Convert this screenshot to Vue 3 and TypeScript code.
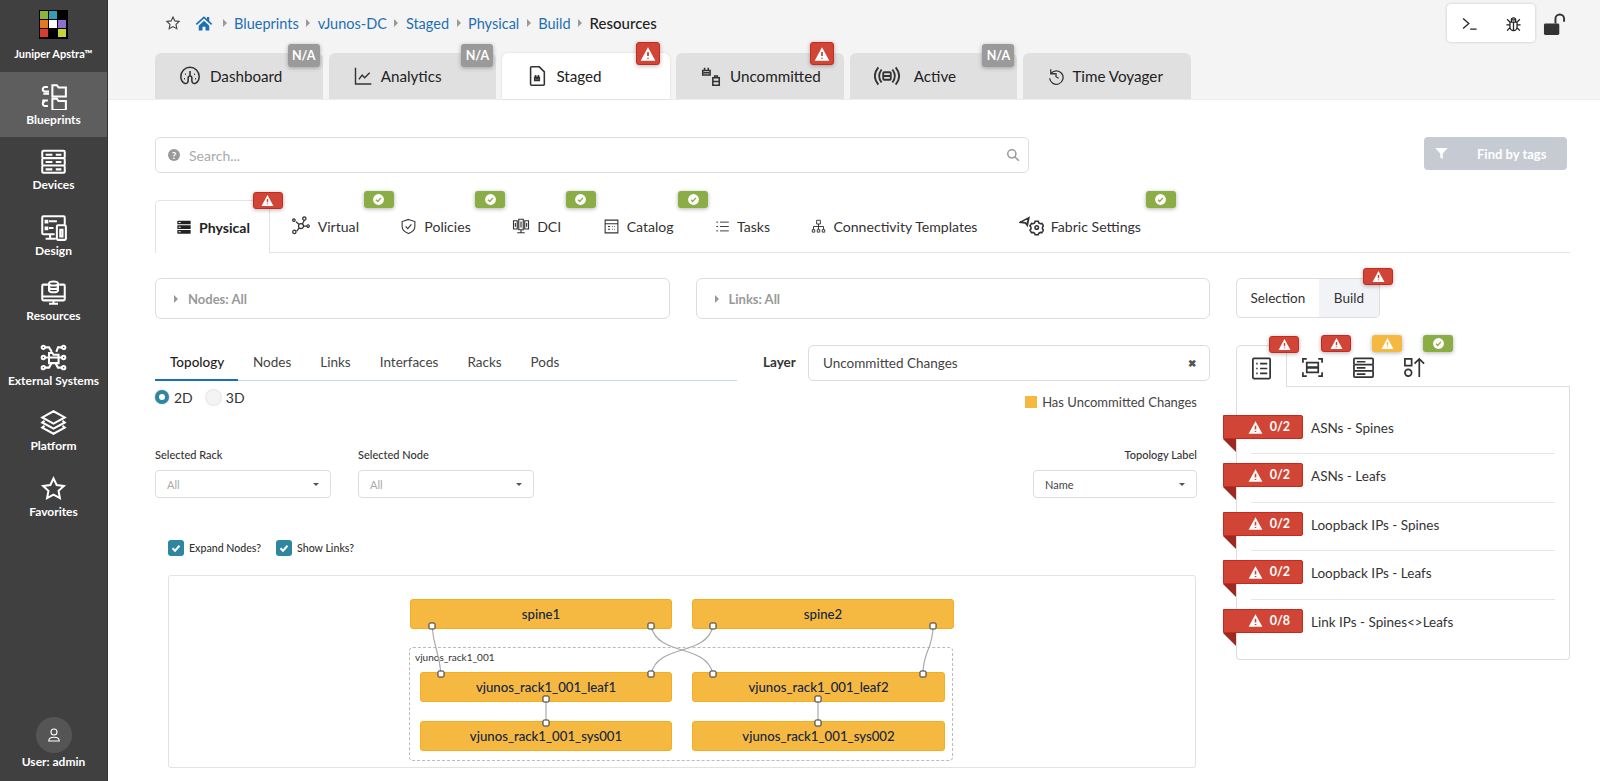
<script setup lang="ts">
const p: Record<string, string> = {
  blueprints: 'M11 2h4l1.500 2H23v8H11z M11 14h4l1.500 2H23v8H11z M7 3.500H4.500a2 2 0 0 0 0 4H8 M3 9.500h5 M2 15.500h5 M7 20.500H4.500a2 2 0 0 1 0-4',
  devices: 'M3 2.500h18a1 1 0 0 1 1 1v4.500a1 1 0 0 1-1 1H3a1 1 0 0 1-1-1V3.500a1 1 0 0 1 1-1z M3 9h18a1 1 0 0 1 1 1v4.500a1 1 0 0 1-1 1H3a1 1 0 0 1-1-1V10a1 1 0 0 1 1-1z M3 15.500h18a1 1 0 0 1 1 1V21a1 1 0 0 1-1 1H3a1 1 0 0 1-1-1v-4.500a1 1 0 0 1 1-1z M5 6h6 M14 6h5 M5 12.500h6 M14 12.500h5 M5 19h6 M14 19h5',
  design: 'M13 18H3a1 1 0 0 1-1-1V3a1 1 0 0 1 1-1h18a1 1 0 0 1 1 1v6 M9 18v4 M5 22h9 M16 10h6a1 1 0 0 1 1 1v11a1 1 0 0 1-1 1h-6a1 1 0 0 1-1-1V11a1 1 0 0 1 1-1z M18 14h2v6h-2z M5 6h1.500v1.500H5z M8 6.500h7 M5 12h1.500v1.500H5z M8 12.500h4',
  resources: 'M7 5H3a1 1 0 0 0-1 1v12a1 1 0 0 0 1 1h18a1 1 0 0 0 1-1V6a1 1 0 0 0-1-1h-4 M2 15.500h20 M12 19v3 M8 22h8 M8 4c0-2.500 8-2.500 8 0s-8 2.500-8 0z M8 4v6c0 2.500 8 2.500 8 0V4 M8 7c0 2.500 8 2.500 8 0',
  external: 'M8 8h3l1 1.500h4.500V17H8z M8 12h8 M4 3h4l2.500 4 M20 3h-4l-1.500 4 M4 12h3 M20 12h-3 M4 21h4l2-3.500 M20 21h-4l-2-3.500 M1.500 3a1.500 1.500 0 1 0 3 0 1.500 1.500 0 1 0-3 0z M19.500 3a1.500 1.500 0 1 0 3 0 1.500 1.500 0 1 0-3 0z M1.500 12a1.500 1.500 0 1 0 3 0 1.500 1.500 0 1 0-3 0z M19.500 12a1.500 1.500 0 1 0 3 0 1.500 1.500 0 1 0-3 0z M1.500 21a1.500 1.500 0 1 0 3 0 1.500 1.500 0 1 0-3 0z M19.500 21a1.500 1.500 0 1 0 3 0 1.500 1.500 0 1 0-3 0z',
  platform: 'M12 2l10 5.500-10 5.500L2 7.500z M4 10.500L2 12l10 5.500L22 12l-2-1.500 M4 15L2 16.500 12 22l10-5.500-2-1.500',
  star: 'M12 3l2.800 5.900 6.400.8-4.700 4.400 1.200 6.400L12 17.400l-5.700 3.100 1.200-6.400-4.700-4.400 6.400-.8z',
  dash: 'M12 2.500a10 10 0 0 0-10 10c0 3.500 1.500 6 4 7.500 2.500 1 4-1 4-3V14a2 2 0 1 1 4 0v3c0 2 1.500 4 4 3 2.500-1.500 4-4 4-7.500a10 10 0 0 0-10-10z M12 6.500v5 M6.500 10h1 M5.500 15h1 M16.500 10h1 M17.500 15h1',
  analytics: 'M3 2v19.500h19 M7 16l4-5 3 3 6-6',
  staged: 'M6 2h8.500L20 7.500V21a1 1 0 0 1-1 1H6a1 1 0 0 1-1-1V3a1 1 0 0 1 1-1z M9.500 13.500h5V17h-5z M10.500 15h3 M10.500 11v2 M13.500 11v2',
  uncommitted: 'M3 6h8v5H3z M4 8.500h6 M5 3v3 M9 3v3 M14 14h7v8h-7z M14 18h7 M16 14v-2h3v2',
  active: 'M4 4C0 9 0 15 4 20 M7 6C4 10 4 14 7 18 M20 4c4 5 4 11 0 16 M17 6c3 4 3 8 0 12 M9.500 8.500h5a1 1 0 0 1 1 1v5a1 1 0 0 1-1 1h-5a1 1 0 0 1-1-1v-5a1 1 0 0 1 1-1z M8.500 12h7',
  history: 'M5 3v6h6 M5 9a9 9 0 1 1-1.500 6 M12 8v5l3.500 2',
  physical: 'M3 2.500h18a1 1 0 0 1 1 1V8H2V3.500a1 1 0 0 1 1-1z M4 4.500v1.500h3V4.500z M2 9.500h20V15H2z M4 11.500V13h3v-1.500z M2 16.500h20V21a1 1 0 0 1-1 1H3a1 1 0 0 1-1-1z M4 18.500V20h3v-1.500z',
  virtual: 'M9 12a3 3 0 1 0 6 0 3 3 0 1 0-6 0z M14 9l2-4 M15 12h4 M10 14l-3 4 M9.500 10L6 7 M18 3a2 2 0 1 0 0 .1z M22 12a1.500 1.500 0 1 0 0 .1z M6 19a2 2 0 1 0 0 .1z M5 5a1.500 1.500 0 1 0 0 .1z',
  shield: 'M12 2l9 3v7c0 5-4 8-9 10-5-2-9-5-9-10V5z M8 12l3 3 5-6',
  dci: 'M2 5h5v11H2z M9 3h6v14H9z M17 5h5v11h-5z M4.500 8v5 M12 6v8 M19.500 8v5 M12 17v4 M7 21h10',
  catalog: 'M3 3h18v18H3z M3 8h18 M7 12h3 M7 16h3 M13 12h1 M16 12h1 M13 16h1 M16 16h1',
  tasks: 'M8 5h14 M8 12h14 M8 19h14 M2 5h3 M2 12h3 M2 19h3',
  ct: 'M9 2h6v6H9z M12 8v4 M4 12h16 M4 12v4 M12 12v4 M20 12v4 M2 17h4v4H2z M10 17h4v4h-4z M18 17h4v4h-4z',
  fabric: 'M1 8l8.500-4.500L8 11 6 8.500z M8.500 6.500L7.500 11 M15.500 7h3l.5 1.500 1.500.8 1.500-.3 1.500 2.500-1 1.200v1.600l1 1.200-1.500 2.500-1.500-.3-1.500.8-.5 1.500h-3l-.5-1.500-1.500-.8-1.500.3-1.500-2.500 1-1.200v-1.600l-1-1.200 1.500-2.500 1.500.3 1.500-.8z M15.300 13a1.700 1.700 0 1 0 3.400 0 1.700 1.700 0 1 0-3.400 0z',
  list: 'M4 1.500h16a1 1 0 0 1 1 1v19a1 1 0 0 1-1 1H4a1 1 0 0 1-1-1v-19a1 1 0 0 1 1-1z M6.500 7h1.500 M6.500 12h1.500 M6.500 17h1.500 M10.500 7h7.500 M10.500 12h7.500 M10.500 17h7.500',
  scan: 'M2 7V3h4 M18 3h4v4 M2 17v4h4 M18 21h4v-4 M6 7h12v4.500H6z M6 12.500h12V17H6z',
  stack: 'M3 2.500h18a1 1 0 0 1 1 1v4.500a1 1 0 0 1-1 1H3a1 1 0 0 1-1-1V3.500a1 1 0 0 1 1-1z M3 9h18a1 1 0 0 1 1 1v4.500a1 1 0 0 1-1 1H3a1 1 0 0 1-1-1V10a1 1 0 0 1 1-1z M3 15.500h18a1 1 0 0 1 1 1V21a1 1 0 0 1-1 1H3a1 1 0 0 1-1-1v-4.500a1 1 0 0 1 1-1z M5 6h9 M5 12.500h9 M5 19h9',
  shapes: 'M2 3h7v7H2z M2 17.500a3.500 3.500 0 1 0 7 0 3.500 3.500 0 1 0-7 0z M17 22V3 M12 8l5-5 5 5',
}

const side = [
  { label: 'Blueprints', icon: 'blueprints', active: true },
  { label: 'Devices', icon: 'devices' },
  { label: 'Design', icon: 'design' },
  { label: 'Resources', icon: 'resources' },
  { label: 'External Systems', icon: 'external' },
  { label: 'Platform', icon: 'platform' },
  { label: 'Favorites', icon: 'star' },
]

const crumbs = ['Blueprints', 'vJunos-DC', 'Staged', 'Physical', 'Build']

const tabs = [
  { label: 'Dashboard', icon: 'dash', size: 22, gap: 9, badge: 'na' },
  { label: 'Analytics', icon: 'analytics', size: 20, gap: 8, badge: 'na' },
  { label: 'Staged', icon: 'staged', size: 22, gap: 8, badge: 'warn', active: true },
  { label: 'Uncommitted', icon: 'uncommitted', size: 22, gap: 8, badge: 'warn' },
  { label: 'Active', icon: 'active', size: 26, gap: 14, badge: 'na' },
  { label: 'Time Voyager', icon: 'history', size: 18, gap: 7, badge: '' },
]

const subTabs = [
  { label: 'Physical', icon: 'physical', size: 16, badge: 'warn', active: true },
  { label: 'Virtual', icon: 'virtual', size: 20, badge: 'ok' },
  { label: 'Policies', icon: 'shield', size: 17, badge: 'ok' },
  { label: 'DCI', icon: 'dci', size: 18, badge: 'ok' },
  { label: 'Catalog', icon: 'catalog', size: 17, badge: 'ok' },
  { label: 'Tasks', icon: 'tasks', size: 15, badge: '' },
  { label: 'Connectivity Templates', icon: 'ct', size: 15, badge: '' },
  { label: 'Fabric Settings', icon: 'fabric', size: 25, badge: 'ok' },
]

const topoTabs = ['Topology', 'Nodes', 'Links', 'Interfaces', 'Racks', 'Pods']

const buildTabs = [
  { icon: 'list', badge: 'warn', active: true },
  { icon: 'scan', badge: 'warn' },
  { icon: 'stack', badge: 'amber' },
  { icon: 'shapes', badge: 'ok' },
]

const buildRows = [
  { count: '0/2', label: 'ASNs - Spines' },
  { count: '0/2', label: 'ASNs - Leafs' },
  { count: '0/2', label: 'Loopback IPs - Spines' },
  { count: '0/2', label: 'Loopback IPs - Leafs' },
  { count: '0/8', label: 'Link IPs - Spines<>Leafs' },
]

// positions are relative to the topology canvas
const nodes = [
  { name: 'spine1', x: 241, y: 23, w: 262 },
  { name: 'spine2', x: 523, y: 23, w: 262 },
  { name: 'vjunos_rack1_001_leaf1', x: 251, y: 96, w: 252 },
  { name: 'vjunos_rack1_001_leaf2', x: 523, y: 96, w: 253 },
  { name: 'vjunos_rack1_001_sys001', x: 251, y: 145, w: 252 },
  { name: 'vjunos_rack1_001_sys002', x: 523, y: 145, w: 253 },
]

const ports = [
  [263, 50], [482, 50], [544, 50], [764, 50],
  [272, 98], [482, 98], [544, 98], [754, 98],
  [377, 123], [377, 147], [649, 123], [649, 147],
]

const links = [
  'M263 50C265 74 270 74 272 98',
  'M482 50C489 81 537 67 544 98',
  'M544 50C537 81 489 67 482 98',
  'M764 50C764 74 754 74 754 98',
  'M377 123V147',
  'M649 123V147',
]
</script>

<template>
  <div class="app">
    <aside class="sidebar">
      <div class="brand">
        <div class="logo">
          <i style="background:#8fb339"></i><i style="background:#2f9fb5"></i><i></i>
          <i style="background:#e5781f"></i><i style="background:#fff"></i><i style="background:#8d6fd1"></i>
          <i style="background:#d93a2f"></i><i></i><i style="background:#c4d432"></i>
        </div>
        <span>Juniper Apstra™</span>
      </div>
      <div v-for="item in side" :key="item.label" class="side-item" :class="{ active: item.active }">
        <svg class="side-icon" viewBox="0 0 24 24"><path :d="p[item.icon]" /></svg>
        <span>{{ item.label }}</span>
      </div>
      <div class="user">
        <div class="avatar">
          <svg viewBox="0 0 24 24"><path d="M12 4a4 4 0 1 0 0 8 4 4 0 1 0 0-8z M5 20c0-4 3-5 7-5s7 1 7 5z" /></svg>
        </div>
        <span>User: admin</span>
      </div>
    </aside>

    <main class="main">
      <header class="header">
        <div class="crumb-row">
          <nav class="crumbs">
            <svg class="crumb-star" viewBox="0 0 24 24"><path :d="p.star" /></svg>
            <svg class="home" viewBox="0 0 24 24"><path d="M12 3L1 13l1.500 1.500L12 6l9.500 8.500L23 13l-4-3.600V4h-3v2.700zM5 15.500V22h5v-5h4v5h5v-6.500L12 9z" /></svg>
            <template v-for="c in crumbs" :key="c">
              <i class="caret"></i>
              <a class="crumb">{{ c }}</a>
            </template>
            <i class="caret"></i>
            <span class="crumb-last">Resources</span>
          </nav>
          <div class="tools">
            <div class="toolbox">
              <svg viewBox="0 0 24 24"><path d="M3 5l8 7-8 7 M13 20h9" /></svg>
              <svg viewBox="0 0 24 24"><path d="M9 7h6v3H9z M7 10h10v7a5 5 0 0 1-10 0z M12 10v12 M3 6l4 4 M21 6l-4 4 M2 14h5 M22 14h-5 M3 22l4-4 M21 22l-4-4 M9 7a3 3 0 0 1 6 0" /></svg>
            </div>
            <svg class="lock" viewBox="0 0 24 24">
              <path class="lock-arc" d="M13 11V6a4.500 4.500 0 0 1 9 0v3" />
              <rect x="1" y="11" width="16" height="12" rx="1.500" />
            </svg>
          </div>
        </div>
        <div class="tabs">
          <div v-for="t in tabs" :key="t.label" class="tab" :class="{ active: t.active }">
            <svg
              class="tab-icon"
              viewBox="0 0 24 24"
              :style="{ width: t.size + 'px', height: t.size + 'px', marginRight: t.gap + 'px' }"
            ><path :d="p[t.icon]" /></svg>
            <span>{{ t.label }}</span>
            <b v-if="t.badge === 'na'" class="badge na tab-badge">N/A</b>
            <b v-else-if="t.badge === 'warn'" class="badge warn tab-badge narrow">
              <svg viewBox="0 0 24 24"><path d="M12 2L1 22h22z" /><path class="mark" d="M12 9v6 M12 17.500v1.500" /></svg>
            </b>
          </div>
        </div>
      </header>

      <div class="body">
        <div class="search-row">
          <div class="search">
            <span class="help">?</span>
            <span class="placeholder">Search...</span>
            <svg class="mag" viewBox="0 0 24 24"><path d="M10 3a7 7 0 1 0 0 14 7 7 0 1 0 0-14z M15 15l7 7" /></svg>
          </div>
          <button class="find">
            <svg viewBox="0 0 24 24"><path d="M2 3h20l-8 9v9l-4-3v-6z" /></svg>
            <span>Find by tags</span>
          </button>
        </div>

        <div class="subtabs">
          <div v-for="t in subTabs" :key="t.label" class="subtab" :class="{ active: t.active }">
            <svg
              class="sub-icon"
              viewBox="0 0 24 24"
              :style="{ width: t.size + 'px', height: t.size + 'px' }"
            ><path :d="p[t.icon]" /></svg>
            <span>{{ t.label }}</span>
            <b v-if="t.badge === 'warn'" class="badge warn sub-badge">
              <svg viewBox="0 0 24 24"><path d="M12 2L1 22h22z" /><path class="mark" d="M12 9v6 M12 17.500v1.500" /></svg>
            </b>
            <b v-else-if="t.badge === 'ok'" class="badge ok sub-badge">
              <svg viewBox="0 0 24 24"><circle cx="12" cy="12" r="10" /><path class="mark" d="M7.500 12.500l3 3 6-6.500" /></svg>
            </b>
          </div>
        </div>

        <div class="columns">
          <section class="left">
            <div class="filters">
              <div class="filter"><i class="caret dark"></i>Nodes: All</div>
              <div class="filter"><i class="caret dark"></i>Links: All</div>
            </div>

            <div class="topo-head">
              <div class="topo-tabs">
                <span v-for="(t, i) in topoTabs" :key="t" class="topo-tab" :class="{ active: i === 0 }">{{ t }}</span>
              </div>
              <label class="layer-label">Layer</label>
              <div class="layer">
                <span>Uncommitted Changes</span>
                <b>✖</b>
              </div>
            </div>

            <div class="radio-row">
              <div class="radios">
                <i class="radio on"></i><span>2D</span>
                <i class="radio"></i><span>3D</span>
              </div>
              <div class="legend"><i></i>Has Uncommitted Changes</div>
            </div>

            <div class="select-row">
              <div class="field">
                <label>Selected Rack</label>
                <div class="select"><span>All</span><i class="drop"></i></div>
              </div>
              <div class="field">
                <label>Selected Node</label>
                <div class="select"><span>All</span><i class="drop"></i></div>
              </div>
              <div class="field right">
                <label>Topology Label</label>
                <div class="select"><span class="dark-text">Name</span><i class="drop"></i></div>
              </div>
            </div>

            <div class="checks">
              <label><i class="check"><svg viewBox="0 0 24 24"><path d="M5 12.500l5 5 9-10" /></svg></i>Expand Nodes?</label>
              <label><i class="check"><svg viewBox="0 0 24 24"><path d="M5 12.500l5 5 9-10" /></svg></i>Show Links?</label>
            </div>

            <div class="canvas">
              <div class="rack"><span>vjunos_rack1_001</span></div>
              <div
                v-for="n in nodes"
                :key="n.name"
                class="node"
                :style="{ left: n.x + 'px', top: n.y + 'px', width: n.w + 'px' }"
              >{{ n.name }}</div>
              <svg class="wires" viewBox="0 0 1028 191">
                <path v-for="(l, i) in links" :key="i" :d="l" />
                <rect v-for="(pt, i) in ports" :key="'port' + i" :x="pt[0] - 3" :y="pt[1] - 3" width="6" height="6" rx="1" />
              </svg>
            </div>
          </section>

          <section class="right-col">
            <div class="segment">
              <span>Selection</span>
              <span class="seg-on">Build</span>
              <b class="badge warn seg-badge">
                <svg viewBox="0 0 24 24"><path d="M12 2L1 22h22z" /><path class="mark" d="M12 9v6 M12 17.500v1.500" /></svg>
              </b>
            </div>

            <div class="build-tabs">
              <div v-for="t in buildTabs" :key="t.icon" class="build-tab" :class="{ active: t.active }">
                <svg viewBox="0 0 24 24"><path :d="p[t.icon]" /></svg>
                <b v-if="t.badge === 'ok'" class="badge ok build-badge">
                  <svg viewBox="0 0 24 24"><circle cx="12" cy="12" r="10" /><path class="mark" d="M7.500 12.500l3 3 6-6.500" /></svg>
                </b>
                <b v-else class="badge build-badge" :class="t.badge">
                  <svg viewBox="0 0 24 24"><path d="M12 2L1 22h22z" /><path class="mark" d="M12 9v6 M12 17.500v1.500" /></svg>
                </b>
              </div>
            </div>

            <div class="build-panel">
              <div v-for="r in buildRows" :key="r.label" class="build-row">
                <div class="ribbon">
                  <svg viewBox="0 0 24 24"><path d="M12 2L1 22h22z" /><path class="mark" d="M12 9v6 M12 17.500v1.500" /></svg>
                  <span>{{ r.count }}</span>
                </div>
                <span class="row-label">{{ r.label }}</span>
              </div>
            </div>
          </section>
        </div>
      </div>
    </main>
  </div>
</template>

<style>
html, body {
  overflow: hidden;
  background: #fff;
}
</style>

<style scoped>
.app {
  display: flex;
  height: 781px;
  overflow: hidden;
  font-family: Lato, "Liberation Sans", sans-serif;
  color: #333;
}

/* sidebar */
.sidebar {
  width: 108px;
  flex: none;
  display: flex;
  flex-direction: column;
  align-items: stretch;
  background: #404040;
  border-right: 1px solid #333;
  box-sizing: border-box;
  color: #fff;
  font-size: 12px;
  font-weight: 700;
  text-align: center;
}
.brand {
  height: 72px;
  padding-top: 10px;
  box-sizing: border-box;
  font-size: 11px;
}
.logo {
  display: grid;
  grid-template-columns: repeat(3, 8px);
  grid-auto-rows: 8px;
  gap: 1px;
  width: 29px;
  height: 29px;
  margin: 0 auto 8px;
  padding: 1px;
  box-sizing: border-box;
  background: #000;
}
.brand span {
  display: block;
  white-space: nowrap;
}
.side-item {
  height: 65.300px;
  display: flex;
  flex-direction: column;
  align-items: center;
  padding-top: 11px;
  box-sizing: border-box;
  white-space: nowrap;
}
.side-item.active {
  background: #5e5e5e;
}
.side-icon {
  width: 27px;
  height: 27px;
  margin-bottom: 2px;
  fill: none;
  stroke: #fff;
  stroke-width: 1.800;
}
.user {
  margin-top: auto;
  display: flex;
  flex-direction: column;
  align-items: center;
  padding-bottom: 12px;
  gap: 1px;
}
.avatar {
  width: 36px;
  height: 36px;
  border-radius: 50%;
  background: #555;
  display: flex;
  align-items: center;
  justify-content: center;
}
.avatar svg {
  width: 18px;
  height: 18px;
  fill: none;
  stroke: #fff;
  stroke-width: 1.500;
}

/* header */
.main {
  flex: 1;
  min-width: 0;
}
.header {
  height: 100px;
  box-sizing: border-box;
  background: #f4f4f4;
  border-bottom: 1px solid #ececec;
  padding-left: 47px;
  display: flex;
  flex-direction: column;
}
.crumb-row {
  height: 53px;
  flex: none;
  display: flex;
  justify-content: space-between;
  align-items: flex-start;
  padding-right: 34px;
}
.crumbs {
  display: flex;
  align-items: center;
  height: 46px;
  padding-left: 10px;
  font-size: 14.500px;
}
.crumb-star {
  width: 16px;
  height: 16px;
  fill: none;
  stroke: #444;
  stroke-width: 1.700;
  margin-right: 14px;
}
.home {
  width: 18px;
  height: 18px;
  fill: #1d6fb5;
  margin-right: 2px;
}
.caret {
  display: inline-block;
  width: 0;
  height: 0;
  border-left: 4px solid #999;
  border-top: 4px solid transparent;
  border-bottom: 4px solid transparent;
  margin: 0 7.500px;
}
.crumb {
  color: #1d6fb5;
}
.crumb-last {
  color: #222;
  font-size: 15px;
  font-weight: 500;
}
.tools {
  display: flex;
  align-items: center;
  gap: 8px;
  margin-top: 4px;
}
.toolbox {
  width: 88px;
  height: 38px;
  box-sizing: border-box;
  background: #fff;
  border-radius: 4px;
  box-shadow: 0 0 3px rgba(0, 0, 0, 0.2);
  display: flex;
  align-items: center;
  justify-content: space-around;
}
.toolbox svg {
  width: 17px;
  height: 17px;
  fill: none;
  stroke: #222;
  stroke-width: 1.800;
}
.lock {
  width: 23px;
  height: 23px;
  margin-top: 3px;
  fill: #333;
}
.lock-arc {
  fill: none;
  stroke: #333;
  stroke-width: 2;
}
.tabs {
  display: flex;
  gap: 6px;
  flex: 1;
}
.tab {
  position: relative;
  width: 167.700px;
  box-sizing: border-box;
  background: #e0e0e0;
  border-radius: 6px 6px 0 0;
  display: flex;
  align-items: center;
  padding-left: 24px;
  font-size: 15.200px;
  color: #222;
  white-space: nowrap;
}
.tab.active {
  background: #fff;
  box-shadow: 0 0 2px rgba(0, 0, 0, 0.15);
}
.tab-icon {
  fill: none;
  stroke: #333;
  stroke-width: 1.700;
}
.badge {
  position: absolute;
  display: flex;
  align-items: center;
  justify-content: center;
  border-radius: 3px;
  color: #fff;
  font-size: 12.500px;
  font-weight: 700;
  box-shadow: 0 1px 4px rgba(0, 0, 0, 0.3);
}
.badge svg {
  width: 16px;
  height: 16px;
  fill: #fff;
}
.badge .mark {
  fill: none;
  stroke: #d0402f;
  stroke-width: 2.600;
}
.badge.ok .mark {
  stroke: #8bad45;
}
.badge.amber .mark {
  stroke: #f5b942;
}
.na { background: #9a9a9a; }
.warn { background: #d14536; border: 1px solid #c9281c; box-sizing: border-box; }
.ok { background: #8bad45; }
.amber { background: #f5b942; }
.tab-badge {
  width: 32px;
  height: 23px;
  top: -9px;
  right: 3px;
}
.tab-badge.narrow {
  width: 24px;
  height: 23px;
  top: -11px;
  right: 10px;
}

/* body */
.body {
  padding: 37px 30px 0 47px;
}
.search-row {
  display: flex;
  justify-content: space-between;
  align-items: flex-start;
}
.search {
  width: 874px;
  height: 36px;
  box-sizing: border-box;
  border: 1px solid #ddd;
  border-radius: 5px;
  display: flex;
  align-items: center;
  padding: 0 8px 0 12px;
  font-size: 14px;
  color: #aaa;
}
.help {
  width: 12px;
  height: 12px;
  border-radius: 50%;
  background: #999;
  color: #fff;
  font-size: 10px;
  font-weight: 700;
  line-height: 12px;
  text-align: center;
  margin-right: 9px;
}
.placeholder {
  flex: 1;
}
.mag {
  width: 14px;
  height: 14px;
  fill: none;
  stroke: #999;
  stroke-width: 2.600;
}
.find {
  width: 143px;
  height: 33px;
  margin-right: 3px;
  border: 0;
  border-radius: 4px;
  background: #c6cbd3;
  color: #fff;
  font: 700 13px Lato, sans-serif;
  display: flex;
  align-items: center;
  padding: 0 0 0 10px;
  gap: 28px;
}
.find svg {
  width: 15px;
  height: 15px;
  fill: #fff;
}
.subtabs {
  display: flex;
  margin-top: 27px;
  height: 53px;
  box-sizing: border-box;
  border-bottom: 1px solid #e3e3e3;
}
.subtab {
  position: relative;
  display: flex;
  align-items: center;
  gap: 7px;
  padding: 0 20.700px;
  font-size: 14.100px;
  color: #333;
  white-space: nowrap;
}
.subtab.active {
  font-weight: 700;
  color: #222;
  border: 1px solid #e3e3e3;
  border-bottom: 0;
  border-radius: 5px 5px 0 0;
  background: #fff;
  height: 53px;
  box-sizing: border-box;
  padding: 0 19px 0 20px;
}
.sub-icon {
  flex: none;
  fill: none;
  stroke: #333;
  stroke-width: 1.500;
}
.subtab.active .sub-icon {
  fill: #222;
  fill-rule: evenodd;
  stroke: none;
}
.sub-badge {
  width: 30px;
  height: 17px;
  top: -9px;
  right: -14px;
}
.sub-badge svg {
  width: 13px;
  height: 13px;
}

.columns {
  display: flex;
  margin-top: 25px;
  gap: 26px;
}
.left {
  width: 1055px;
  flex: none;
}
.filters {
  display: flex;
  gap: 26px;
}
.filter {
  flex: 1;
  height: 41px;
  box-sizing: border-box;
  border: 1px solid #ddd;
  border-radius: 6px;
  display: flex;
  align-items: center;
  padding-left: 10px;
  font-size: 13px;
  color: #999;
  font-weight: 700;
}
.caret.dark {
  margin: 0 10px 0 8px;
}
.topo-head {
  display: flex;
  margin-top: 26px;
  height: 36px;
}
.topo-tabs {
  width: 582px;
  height: 36px;
  display: flex;
  box-sizing: border-box;
  border-bottom: 1px solid #c9d6e6;
}
.topo-tab {
  padding: 9px 15px 0;
  font-size: 13.500px;
  color: #444;
  margin-right: -1px;
}
.topo-tab.active {
  font-weight: 500;
  color: #222;
  width: 83px;
  padding: 9px 0 0 15px;
  box-sizing: border-box;
  height: 36px;
  border-bottom: 2px solid #1a6fb5;
  margin-right: 0;
}
.layer-label {
  margin-left: 26px;
  padding-top: 9px;
  width: 45px;
  font-size: 13.500px;
  font-weight: 700;
  color: #333;
}
.layer {
  width: 402px;
  height: 36px;
  box-sizing: border-box;
  border: 1px solid #ddd;
  border-radius: 5px;
  display: flex;
  align-items: center;
  justify-content: space-between;
  padding: 0 13px 0 14px;
  font-size: 13.500px;
  color: #444;
}
.layer b {
  font-size: 10px;
  color: #555;
}
.radio-row {
  display: flex;
  justify-content: space-between;
  height: 24px;
  padding-top: 8px;
  font-size: 14px;
}
.radios {
  display: flex;
  align-items: center;
  height: 16px;
  gap: 5px;
}
.radio {
  width: 15px;
  height: 15px;
  border-radius: 50%;
  background: #f4f4f4;
  box-shadow: 0 0 2px rgba(0, 0, 0, 0.3);
  margin-left: 8px;
}
.radio.on {
  background: #fff;
  border: 4.500px solid #2e86a0;
  width: 6px;
  height: 6px;
  margin-left: 0;
}
.legend {
  display: flex;
  align-items: center;
  gap: 5px;
  margin-top: 5px;
  margin-right: 13px;
  height: 16px;
  font-size: 13px;
  color: #444;
}
.legend i {
  width: 12px;
  height: 12px;
  background: #f5b942;
}
.select-row {
  display: flex;
  gap: 27px;
  margin-top: 35px;
  margin-right: 13px;
}
.field label {
  display: block;
  font-size: 11px;
  font-weight: 500;
  color: #333;
  margin-bottom: 8px;
  height: 14px;
  line-height: 14px;
}
.field.right {
  margin-left: auto;
  text-align: right;
}
.select {
  width: 176px;
  height: 28px;
  box-sizing: border-box;
  border: 1px solid #ddd;
  border-radius: 4px;
  display: flex;
  align-items: center;
  justify-content: space-between;
  padding: 0 11px;
  font-size: 11px;
  color: #aaa;
}
.field.right .select {
  width: 164px;
}
.dark-text {
  color: #444;
}
.drop {
  border-top: 3.500px solid #555;
  border-left: 3px solid transparent;
  border-right: 3px solid transparent;
}
.checks {
  display: flex;
  gap: 15px;
  margin: 41px 0 0 13px;
  font-size: 10.600px;
  font-weight: 500;
  color: #333;
}
.checks label {
  display: flex;
  align-items: center;
  gap: 5px;
  height: 18px;
}
.check {
  width: 16px;
  height: 16px;
  border-radius: 3px;
  background: #2e86a0;
  display: flex;
  align-items: center;
  justify-content: center;
}
.check svg {
  width: 12px;
  height: 12px;
  fill: none;
  stroke: #fff;
  stroke-width: 4;
}
.canvas {
  position: relative;
  width: 1028px;
  height: 193px;
  margin: 18px 0 0 13px;
  box-sizing: border-box;
  border: 1px solid #e2e2e2;
  border-radius: 3px;
}
.rack {
  position: absolute;
  left: 240px;
  top: 71px;
  width: 544px;
  height: 114px;
  box-sizing: border-box;
  border: 1px dashed #bbb;
  border-radius: 4px;
  padding: 3px 5px;
  font-size: 10px;
  color: #333;
}
.node {
  position: absolute;
  height: 30px;
  box-sizing: border-box;
  background: #f5b942;
  border: 1px solid #f4ad1e;
  border-radius: 3px;
  font-size: 13.200px;
  font-weight: 500;
  line-height: 28px;
  text-align: center;
  color: #14253f;
}
.wires {
  position: absolute;
  left: 0;
  top: 0;
  width: 1028px;
  height: 191px;
}
.wires path {
  fill: none;
  stroke: #aaa;
  stroke-width: 1.200;
}
.wires rect {
  fill: #fff;
  stroke: #333;
  stroke-width: 1;
}

/* right column */
.right-col {
  width: 334px;
  flex: none;
}
.segment {
  position: relative;
  width: 144px;
  height: 40px;
  box-sizing: border-box;
  border: 1px solid #ddd;
  border-radius: 5px;
  display: flex;
  font-size: 13.500px;
  color: #333;
  line-height: 38px;
}
.segment span {
  text-align: center;
  width: 83px;
}
.segment .seg-on {
  position: relative;
  width: 61px;
  background: #f1f3f7;
  border-radius: 0 4px 4px 0;
}
/* little pointer under the selected button */
.seg-on::after {
  content: "";
  position: absolute;
  left: 26px;
  bottom: -4px;
  width: 8px;
  height: 8px;
  background: #f1f3f7;
  transform: rotate(45deg);
  z-index: -1;
}
.seg-badge {
  width: 30px;
  height: 17px;
  top: -11px;
  right: -14px;
}
.seg-badge svg {
  width: 13px;
  height: 13px;
}
.build-tabs {
  display: flex;
  height: 42px;
  margin-top: 27px;
}
.build-tab {
  position: relative;
  width: 51px;
  height: 42px;
  box-sizing: border-box;
  display: flex;
  align-items: center;
  justify-content: center;
  padding-top: 4px;
  border-bottom: 1px solid #ddd;
}
.build-tab.active {
  border: 1px solid #ddd;
  border-bottom: 0;
  border-radius: 5px 5px 0 0;
}
.build-tabs::after {
  content: "";
  flex: 1;
  border-bottom: 1px solid #ddd;
}
.build-tab > svg {
  width: 23px;
  height: 23px;
  fill: none;
  stroke: #333;
  stroke-width: 1.800;
}
.build-badge {
  width: 30px;
  height: 17px;
  top: -10px;
  right: -13px;
}
.build-badge svg {
  width: 13px;
  height: 13px;
}
.build-panel {
  height: 273px;
  box-sizing: border-box;
  border: 1px solid #ddd;
  border-top: 0;
  border-radius: 0 0 4px 4px;
  padding: 19px 14px 0 14px;
}
.build-row {
  position: relative;
  height: 48.400px;
  box-sizing: border-box;
  border-bottom: 1px solid #e7e7e7;
  padding-top: 13px;
  padding-left: 60px;
  font-size: 13.500px;
  color: #333;
  line-height: 18px;
}
.build-row:last-child {
  border-bottom: 0;
}
.ribbon {
  position: absolute;
  left: -28px;
  top: 9px;
  width: 80px;
  height: 24px;
  box-sizing: border-box;
  background: #d14536;
  border: 1px solid #c9281c;
  border-radius: 0 2px 2px 0;
  color: #fff;
  font-size: 12.500px;
  font-weight: 700;
  display: flex;
  align-items: center;
  justify-content: flex-end;
  padding-right: 12px;
  gap: 7px;
}
.ribbon::after {
  content: "";
  position: absolute;
  left: -1px;
  top: 23px;
  border-top: 13px solid #9c2a20;
  border-left: 13px solid transparent;
}
.ribbon svg {
  width: 15px;
  height: 15px;
  fill: #fff;
}
.ribbon .mark {
  fill: none;
  stroke: #d14536;
  stroke-width: 2.600;
}
</style>
